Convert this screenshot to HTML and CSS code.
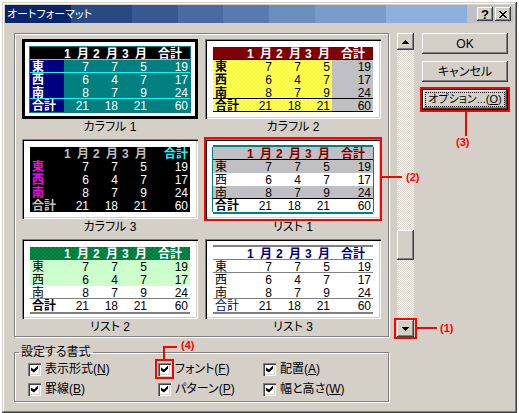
FILE: index.html
```html
<!DOCTYPE html>
<html lang="ja">
<head>
<meta charset="utf-8">
<title>オートフォーマット</title>
<link rel="stylesheet" href="styles.css">
</head>
<body>
<main class="dialog">
  <header class="titlebar">
    <h1>オートフォーマット</h1>
    <button class="raised tool" type="button" aria-label="ヘルプ"><b>?</b></button>
    <button class="raised tool" type="button" aria-label="閉じる"><svg width="8" height="7" viewBox="0 0 8 7"><path d="M0 0h2v1h1v1h2V1h1V0h2v1H7v1H6v1H5v1h1v1h1v1h1v1H6V6H5V5H3v1H2v1H0V6h1V5h1V4h1V3H2V2H1V1H0z"/></svg></button>
  </header>
  <div class="content">
    <section class="gallery etched">
      <figure class="selected">
        <div class="card"><table class="colorful1">
          <tr><th></th><th>1 <span>月</span></th><th>2 <span>月</span></th><th>3 <span>月</span></th><th>合計</th></tr>
          <tr><th>東</th><td>7</td><td>7</td><td>5</td><td>19</td></tr>
          <tr><th>西</th><td>6</td><td>4</td><td>7</td><td>17</td></tr>
          <tr><th>南</th><td>8</td><td>7</td><td>9</td><td>24</td></tr>
          <tr><th>合計</th><td>21</td><td>18</td><td>21</td><td>60</td></tr>
        </table></div>
        <figcaption>カラフル 1</figcaption>
      </figure>
      <figure>
        <div class="card"><table class="colorful2">
          <tr><th></th><th>1 <span>月</span></th><th>2 <span>月</span></th><th>3 <span>月</span></th><th>合計</th></tr>
          <tr><th>東</th><td>7</td><td>7</td><td>5</td><td>19</td></tr>
          <tr><th>西</th><td>6</td><td>4</td><td>7</td><td>17</td></tr>
          <tr><th>南</th><td>8</td><td>7</td><td>9</td><td>24</td></tr>
          <tr><th>合計</th><td>21</td><td>18</td><td>21</td><td>60</td></tr>
        </table></div>
        <figcaption>カラフル 2</figcaption>
      </figure>
      <figure>
        <div class="card"><table class="colorful3">
          <tr><th></th><th>1 <span>月</span></th><th>2 <span>月</span></th><th>3 <span>月</span></th><th>合計</th></tr>
          <tr><th>東</th><td>7</td><td>7</td><td>5</td><td>19</td></tr>
          <tr><th>西</th><td>6</td><td>4</td><td>7</td><td>17</td></tr>
          <tr><th>南</th><td>8</td><td>7</td><td>9</td><td>24</td></tr>
          <tr><th>合計</th><td>21</td><td>18</td><td>21</td><td>60</td></tr>
        </table></div>
        <figcaption>カラフル 3</figcaption>
      </figure>
      <figure>
        <div class="card"><table class="list1">
          <tr><th></th><th>1 <span>月</span></th><th>2 <span>月</span></th><th>3 <span>月</span></th><th>合計</th></tr>
          <tr><th>東</th><td>7</td><td>7</td><td>5</td><td>19</td></tr>
          <tr><th>西</th><td>6</td><td>4</td><td>7</td><td>17</td></tr>
          <tr><th>南</th><td>8</td><td>7</td><td>9</td><td>24</td></tr>
          <tr><th>合計</th><td>21</td><td>18</td><td>21</td><td>60</td></tr>
        </table></div>
        <div class="mark mark-card"><i class="lead"></i><span class="num">(2)</span></div>
        <figcaption>リスト 1</figcaption>
      </figure>
      <figure>
        <div class="card"><table class="list2">
          <tr><th></th><th>1 <span>月</span></th><th>2 <span>月</span></th><th>3 <span>月</span></th><th>合計</th></tr>
          <tr><th>東</th><td>7</td><td>7</td><td>5</td><td>19</td></tr>
          <tr><th>西</th><td>6</td><td>4</td><td>7</td><td>17</td></tr>
          <tr><th>南</th><td>8</td><td>7</td><td>9</td><td>24</td></tr>
          <tr><th>合計</th><td>21</td><td>18</td><td>21</td><td>60</td></tr>
        </table></div>
        <figcaption>リスト 2</figcaption>
      </figure>
      <figure>
        <div class="card"><table class="list3">
          <tr><th></th><th>1 <span>月</span></th><th>2 <span>月</span></th><th>3 <span>月</span></th><th>合計</th></tr>
          <tr><th>東</th><td>7</td><td>7</td><td>5</td><td>19</td></tr>
          <tr><th>西</th><td>6</td><td>4</td><td>7</td><td>17</td></tr>
          <tr><th>南</th><td>8</td><td>7</td><td>9</td><td>24</td></tr>
          <tr><th>合計</th><td>21</td><td>18</td><td>21</td><td>60</td></tr>
        </table></div>
        <figcaption>リスト 3</figcaption>
      </figure>
    </section>

    <div class="scrollbar">
      <button class="raised arrow" type="button" aria-label="上へ"><svg width="7" height="4" viewBox="0 0 7 4"><path d="M3 0h1v1h1v1h1v1h1v1H0V3h1V2h1V1h1z"/></svg></button>
      <div class="before"></div>
      <div class="raised thumb"></div>
      <div class="after"></div>
      <div class="marked">
        <button class="raised arrow" type="button" aria-label="下へ"><svg width="7" height="4" viewBox="0 0 7 4"><path d="M0 0h7v1H6v1H5v1H4v1H3V3H2V2H1V1H0z"/></svg></button>
        <div class="mark mark-arrow"><i class="lead"></i><span class="num">(1)</span></div>
      </div>
    </div>

    <div class="actions">
      <button class="raised" type="button">OK</button>
      <button class="raised" type="button">キャンセル</button>
      <div class="marked">
        <button class="raised focused" type="button"><span>オプション...(<u>O</u>)</span></button>
        <div class="mark mark-option"><i class="lead"></i><span class="num">(3)</span></div>
      </div>
    </div>

    <fieldset>
      <legend>設定する書式</legend>
      <div class="checks">
        <label><input type="checkbox" checked>表示形式(<u>N</u>)</label>
        <label class="marked"><input type="checkbox" checked>フォント(<u>F</u>)<span class="mark mark-check"><i class="lead"></i><span class="num">(4)</span></span></label>
        <label><input type="checkbox" checked>配置(<u>A</u>)</label>
        <label><input type="checkbox" checked>罫線(<u>B</u>)</label>
        <label><input type="checkbox" checked>パターン(<u>P</u>)</label>
        <label><input type="checkbox" checked>幅と高さ(<u>W</u>)</label>
      </div>
    </fieldset>
  </div>
</main>
</body>
</html>
```
FILE: styles.css
```css
:root {
  --face: #d4d0c8;
  --shade: #808080;
  --dark: #404040;
  --red: #ff0000;
}

* { box-sizing: border-box; }

body {
  margin: 0;
  padding: 2px 2px 0;
  background: #fff;
  color: #000;
  font: 12px/16px "Liberation Sans", "Noto Sans CJK JP", sans-serif;
  font-feature-settings: "palt";
}

button { font: inherit; font-feature-settings: inherit; color: inherit; padding: 0; }

.dialog {
  padding: 3px;
  background: var(--face);
  box-shadow: inset -1px -1px var(--dark), inset 1px 1px var(--face),
    inset -2px -2px var(--shade), inset 2px 2px #fff;
}

.titlebar {
  display: flex;
  align-items: center;
  gap: 2px;
  height: 18px;
  padding: 0 2px;
  margin-right: 1px;
  color: #fff;
  background: linear-gradient(90deg,
    #08246b 13%, #294984 13% 25%, #3a5994 25% 34%, #4a69a5 34% 43%,
    #5a79b0 43% 52%, #6b8ebd 52% 61%, #7b9ccb 61% 75%, #8fb0dd 75% 91%, #c0c0c5 91%);
}

.titlebar h1 { flex: 1; margin: 0; font-size: 11px; font-weight: normal; }

.raised {
  display: flex;
  align-items: center;
  justify-content: center;
  border: 0;
  background: var(--face);
  box-shadow: inset -1px -1px var(--dark), inset 1px 1px #fff, inset -2px -2px var(--shade);
}

.tool { width: 16px; height: 14px; color: #000; }
.tool b { font-size: 13px; line-height: 13px; }

.content {
  display: grid;
  grid-template-columns: 1fr 17px 86px;
  column-gap: 8px;
  row-gap: 8px;
  padding: 10px 6px 8px 9px;
}

.etched { border: 1px solid var(--shade); box-shadow: 1px 1px #fff, inset 1px 1px #fff; }

.gallery {
  display: grid;
  grid-template-columns: 1fr 1fr;
  gap: 4px 7px;
  padding: 5px 7px 1px;
}

figure { position: relative; margin: 0; }
figcaption { text-align: center; }

.card {
  padding: 8px 8px 7px;
  background: #fff;
  box-shadow: inset 1px 1px var(--shade), inset 2px 2px #000,
    inset -1px -1px #fff, inset -2px -2px var(--face);
}
.selected .card { box-shadow: inset 0 0 0 3px #000; }

table { width: 100%; table-layout: fixed; border-spacing: 0; line-height: 11px; }
th, td { height: 13px; padding: 2px 2px 0 0; text-align: right; white-space: nowrap; }
th { padding-right: 0; }
th:first-child { width: 34px; padding-left: 2px; text-align: left; }
th:nth-child(2) { width: 27px; }
th:nth-child(3), th:nth-child(4) { width: 29px; }
th span { margin-left: 3px; }
tr:first-child th { padding-right: 2px; }
tr:first-child th:last-child { padding-right: 8px; }

.colorful1 { background: #008080; color: #fff; box-shadow: 0 0 0 1px #008080; }
.colorful1 tr:first-child { background: #000; }
.colorful1 tr:not(:first-child) th { background: #000080; }
.colorful1 tr:nth-child(1) > *, .colorful1 tr:nth-child(2) > *, .colorful1 tr:nth-child(4) > * { box-shadow: inset 0 -1px #00ffff; }

.colorful2 { background: repeating-conic-gradient(#ffff00 0 25%, #ffff90 0 50%) 0 0 / 4px 4px; }
.colorful2 tr:first-child { background: #800000; color: #fff; }
.colorful2 td:last-child { background: #c0c0c4; }
.colorful2 tr:first-child > *, .colorful2 tr:nth-child(4) > * { box-shadow: inset 0 -1px #000; }
.colorful2 tr:last-child > * { box-shadow: inset 0 -1px #000; }

.colorful3 { background: #000; color: #fff; }
.colorful3 th { color: #c0c0c0; }
.colorful3 tr:nth-child(n+2):nth-child(-n+4) th { color: #ff00ff; }
.colorful3 tr:first-child th:last-child { padding-right: 2px; color: #00ffff; }

.list1 { box-shadow: -1px 0 #008080, 1px 0 #008080, 0 -2px #008080, 0 2px #008080; }
.list1 tr:first-child { color: #800000; }
.list1 tr:nth-child(1), .list1 tr:nth-child(2), .list1 tr:nth-child(4) { background: #c0c0c4; }
.list1 tr:first-child > *, .list1 tr:nth-child(4) > * { box-shadow: inset 0 -1px #000; }

.list2 { box-shadow: 0 2px var(--shade); }
.list2 tr:first-child { color: #fff; background: repeating-conic-gradient(#008000 0 25%, #008080 0 50%) 0 0 / 4px 4px; }
.list2 tr:nth-child(2), .list2 tr:nth-child(3) { background: #ccffcc; }
.list2 tr:nth-child(4) > * { box-shadow: inset 0 -1px var(--shade); }

.list3 { box-shadow: 0 -2px var(--shade), 0 2px var(--shade); }
.list3 tr:first-child, .list3 tr:last-child th { color: #000080; }
.list3 tr:nth-child(1) > *, .list3 tr:nth-child(2) > *, .list3 tr:nth-child(4) > * { box-shadow: inset 0 -1px var(--shade); }

.list1 tr:nth-child(n+2):nth-child(-n+4) th,
.list2 tr:nth-child(n+2):nth-child(-n+4) th,
.list3 tr:nth-child(n+2) th { font-weight: normal; }

.scrollbar {
  display: flex;
  flex-direction: column;
  background: repeating-conic-gradient(#fff 0 25%, var(--face) 0 50%) 0 0 / 2px 2px;
}
.arrow { width: 100%; height: 17px; }
.before { flex: 3; }
.thumb { height: 30px; }
.after { flex: 1; }

.actions { display: flex; flex-direction: column; gap: 7px; }
.actions button { width: 100%; height: 21px; }
.actions .focused { border: 1px solid #000; }
.focused span { flex: 1; margin: 0 2px; line-height: 13px; border: 1px dotted #000; white-space: nowrap; font-size: 11px; }

fieldset {
  min-width: 0;
  margin: 0;
  padding: 0 2px 2px 13px;
  border: 1px solid var(--shade);
  box-shadow: 1px 1px #fff, inset 1px 1px #fff;
}
legend { margin-left: -9px; padding: 0 2px; line-height: 14px; }

.checks { display: grid; grid-template-columns: 130fr 105fr 123fr; grid-auto-rows: 20px; }
.checks label { display: flex; align-items: center; }

input {
  appearance: none;
  width: 13px;
  height: 13px;
  margin: 0 4px 0 0;
  padding: 3px;
  background: #fff;
  box-shadow: inset 1px 1px var(--shade), inset 2px 2px var(--dark), inset -1px -1px #fff, inset -2px -2px var(--face);
}
input:checked::before {
  content: "";
  display: block;
  width: 7px;
  height: 7px;
  background: #000;
  clip-path: polygon(0 2px, 3px 4px, 7px 0, 7px 3px, 3px 7px, 0 5px);
}

/* Numbered red callouts laid over the controls */
.marked { position: relative; }
.mark { position: absolute; border: 2px solid var(--red); pointer-events: none; }
.lead, .num { position: absolute; }
.lead { background: var(--red); }
.num { color: var(--red); font-size: 11px; font-weight: bold; line-height: 12px; }

.mark-card { inset: -2px -1px 14px -1px; }
.mark-card .lead { left: 100%; top: 37px; width: 22px; height: 2px; }
.mark-card .num { left: calc(100% + 26px); top: 32px; }

.mark-arrow { inset: -2px -3px; }
.mark-arrow .lead { left: 100%; top: 7px; width: 22px; height: 2px; }
.mark-arrow .num { left: calc(100% + 25px); top: 2px; }

.mark-option { inset: -2px; }
.mark-option .lead { left: 50%; top: 100%; width: 2px; height: 26px; }
.mark-option .num { left: 34px; top: calc(100% + 26px); }

.mark-check { left: -3px; top: 0; width: 19px; height: 20px; }
.mark-check .lead {
  left: 6px;
  bottom: 100%;
  width: 14px;
  height: 15px;
  border: solid var(--red);
  border-width: 2px 0 0 2px;
  background: none;
}
.mark-check .num { left: 24px; top: -22px; }
```
